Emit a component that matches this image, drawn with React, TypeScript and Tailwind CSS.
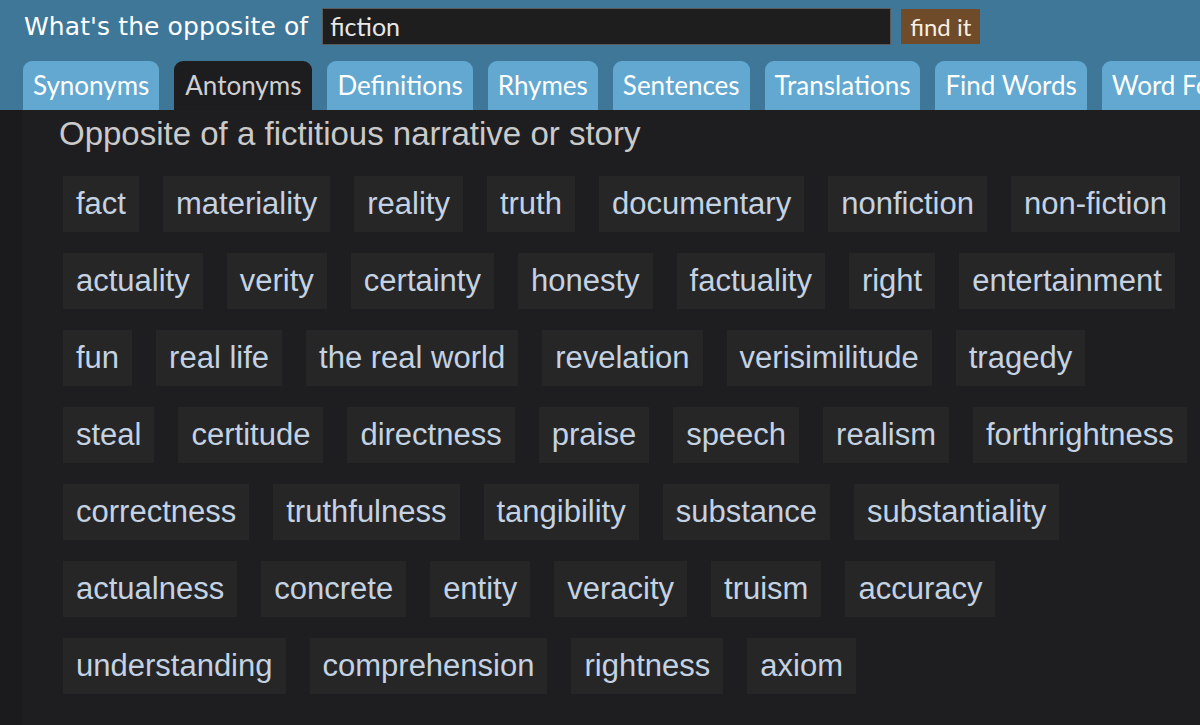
import React, { useState } from 'react';

const tabs = [
  'Synonyms',
  'Antonyms',
  'Definitions',
  'Rhymes',
  'Sentences',
  'Translations',
  'Find Words',
  'Word Forms',
];

const words = [
  'fact', 'materiality', 'reality', 'truth', 'documentary', 'nonfiction', 'non-fiction',
  'actuality', 'verity', 'certainty', 'honesty', 'factuality', 'right', 'entertainment',
  'fun', 'real life', 'the real world', 'revelation', 'verisimilitude', 'tragedy',
  'steal', 'certitude', 'directness', 'praise', 'speech', 'realism', 'forthrightness',
  'correctness', 'truthfulness', 'tangibility', 'substance', 'substantiality',
  'actualness', 'concrete', 'entity', 'veracity', 'truism', 'accuracy',
  'understanding', 'comprehension', 'rightness', 'axiom',
];

export default function App() {
  const [query, setQuery] = useState('fiction');
  const active = 'Antonyms';

  return (
    <div className="w-[1200px] h-[725px] overflow-hidden bg-[#1b1b1d] flex flex-col">
      {/* Header */}
      <div className="bg-[#3f7799] pt-[8px]">
        <div className="flex items-center h-[37px]">
          <span className="ml-[24px] text-white text-[25px] font-['DejaVu_Sans',sans-serif] tracking-[0.1px]">
            What's the opposite of
          </span>
          <input
            value={query}
            onChange={(e) => setQuery(e.target.value)}
            className="ml-[14px] w-[569px] h-[37px] bg-[#1f1e1e] border border-[#5a5a5a] px-[7px] text-[#e6e6e6] text-[25px] font-['Lato',sans-serif] outline-none"
          />
          <button className="ml-[10px] h-[35px] px-[9px] bg-[#6f4b2a] text-[#f6efe2] text-[24px] font-['Lato',sans-serif] leading-none">
            find it
          </button>
        </div>

        {/* Tabs */}
        <div className="flex gap-[15px] pl-[23px] mt-[16px] whitespace-nowrap">
          {tabs.map((t) => (
            <div
              key={t}
              className={
                t === active
                  ? 'h-[49px] px-[11px] flex items-center rounded-t-[9px] bg-[#1d1d20] text-[#d0d0d0] text-[26px] font-["Lato",sans-serif] shrink-0'
                  : 'h-[49px] px-[10px] flex items-center rounded-t-[9px] bg-[#62a8d0] text-white text-[26px] font-["Lato",sans-serif] shrink-0'
              }
            >
              {t}
            </div>
          ))}
        </div>
      </div>

      {/* Results */}
      <div className="flex-1 ml-[22px] bg-[#1e1e21] pl-[41px] pt-[4px]">
        <h2 className="-ml-[4px] text-[33px] leading-[40px] text-[#cacaca] font-['Liberation_Sans',Arial,sans-serif]">
          Opposite of a fictitious narrative or story
        </h2>
        <div className="mt-[22px] w-[1125px] flex flex-wrap gap-x-[24px] gap-y-[21px]">
          {words.map((w) => (
            <div
              key={w}
              className="h-[56px] px-[13px] flex items-center bg-[#262627] text-[#c4d2e2] text-[31px] font-['Liberation_Sans',Arial,sans-serif]"
            >
              {w}
            </div>
          ))}
        </div>
      </div>
    </div>
  );
}
